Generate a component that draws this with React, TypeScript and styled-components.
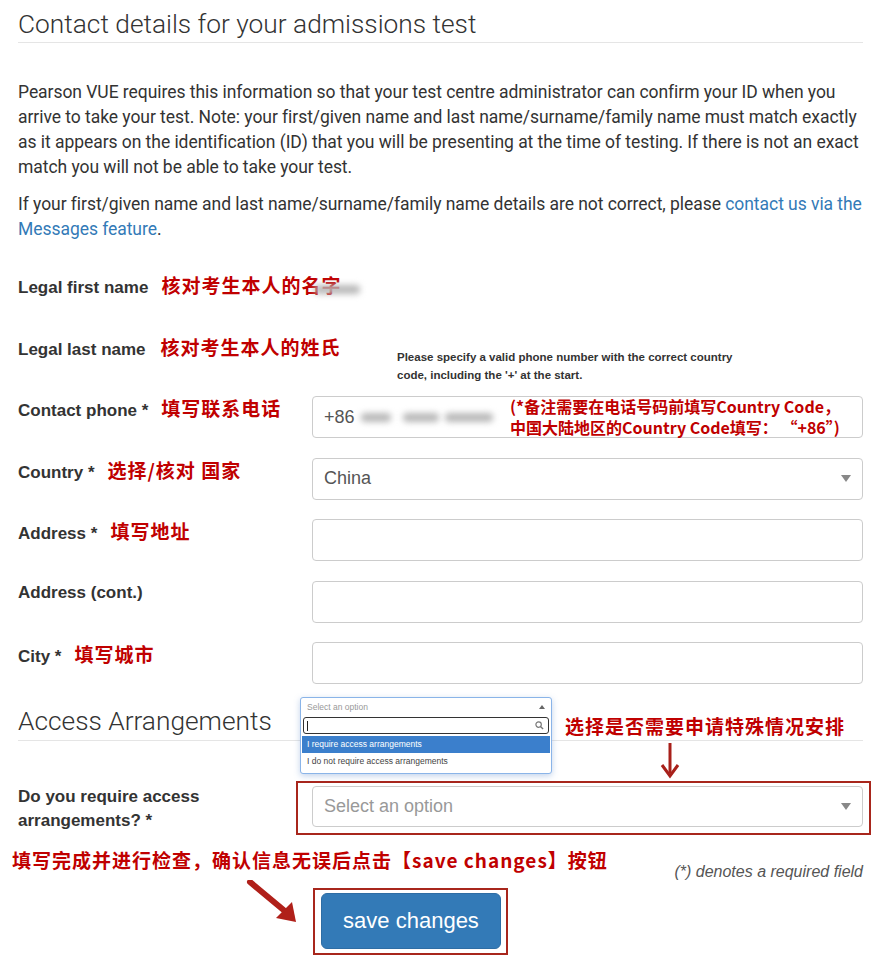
import styled, { createGlobalStyle } from "styled-components";

const GlobalStyle = createGlobalStyle`
  body {
    margin: 0;
    background: #fff;
    color: #333;
    font-family: "Liberation Sans", Arial, sans-serif;
  }
`;

const RED = "#c00000";
const BOX_RED = "#a8261c";

const Page = styled.div`
  width: 877px;
  box-sizing: border-box;
  padding: 0 14px 20px 18px;
`;

const Title = styled.h2`
  margin: 9px 0 0;
  padding-bottom: 3px;
  font-family: Roboto, "Liberation Sans", sans-serif;
  font-weight: 300;
  font-size: 26.3px;
  line-height: 30px;
  color: #333;
  border-bottom: 1px solid #e5e5e5;
`;

const Para = styled.p<{ $top: number }>`
  margin: ${(p) => p.$top}px 0 0;
  font-family: Roboto, "Liberation Sans", sans-serif;
  font-size: 17.5px;
  letter-spacing: -0.05px;
  line-height: 25px;
  color: #333;
`;

const Link = styled.a`
  color: #337ab7;
  text-decoration: none;
`;

const Form = styled.div`
  margin-top: 31px;
  display: flex;
  flex-direction: column;
  gap: 19.5px;
`;

const Row = styled.div`
  display: grid;
  grid-template-columns: 294px 1fr;
  height: 42px;
`;

const Label = styled.div`
  font-weight: 700;
  font-size: 17px;
  line-height: 24px;
  color: #333;
  white-space: nowrap;
`;

const Note = styled.span<{ $gap?: number }>`
  margin-left: ${(p) => p.$gap ?? 13}px;
  font-family: "Noto Sans CJK SC", sans-serif;
  font-weight: 700;
  font-size: 19px;
  letter-spacing: 1px;
  color: ${RED};
`;

const Field = styled.div`
  position: relative;
`;

const Blur = styled.span<{ $w: number; $left: number; $top: number }>`
  display: inline-block;
  width: ${(p) => p.$w}px;
  height: 9px;
  margin-left: ${(p) => p.$left}px;
  margin-top: ${(p) => p.$top}px;
  background: #b8b8b8;
  border-radius: 4px;
  filter: blur(3px);
  vertical-align: middle;
`;

const Help = styled.div`
  padding: 13px 0 0 85px;
  font-size: 11.5px;
  font-weight: 700;
  line-height: 18px;
  color: #333;
`;

const Input = styled.div<{ $h?: number }>`
  height: ${(p) => p.$h ?? 42}px;
  box-sizing: border-box;
  border: 1px solid #ccc;
  border-radius: 4px;
  padding: 0 11px;
  display: flex;
  align-items: center;
  font-size: 18px;
  color: #555;
  background: #fff;
`;

const Placeholder = styled.span`
  color: #999;
  flex: 1;
`;

const Value = styled.span`
  flex: 1;
`;

const Caret = () => (
  <svg width="10" height="7" viewBox="0 0 10 7">
    <path d="M0 0 L10 0 L5 7 Z" fill="#888" />
  </svg>
);

const PhoneNote = styled.div`
  position: absolute;
  left: 198px;
  top: 0;
  font-family: "Noto Sans CJK SC", sans-serif;
  font-weight: 700;
  font-size: 16px;
  line-height: 21px;
  color: ${RED};
  white-space: nowrap;
`;

const Section = styled.div`
  position: relative;
  margin-top: 22px;
`;

const SubTitle = styled.h2`
  margin: 0;
  padding-bottom: 4px;
  font-family: Roboto, "Liberation Sans", sans-serif;
  font-weight: 300;
  font-size: 26.3px;
  line-height: 30px;
  color: #333;
  border-bottom: 1px solid #e5e5e5;
`;

const Popup = styled.div`
  position: absolute;
  left: 282px;
  top: -9px;
  width: 252px;
  box-sizing: border-box;
  border: 1px solid #8ab4e8;
  border-radius: 3px;
  background: #fff;
  box-shadow: 0 2px 6px rgba(80, 130, 200, 0.35);
  font-size: 8.5px;
  color: #444;
  padding-bottom: 3px;
`;

const PopupHead = styled.div`
  display: flex;
  align-items: center;
  justify-content: space-between;
  height: 18px;
  padding: 0 6px;
  color: #999;
`;

const Search = styled.div`
  margin: 1px 2px 2px;
  height: 17px;
  box-sizing: border-box;
  border: 1px solid #333;
  border-radius: 3px;
  display: flex;
  align-items: center;
  justify-content: space-between;
  padding: 0 4px 0 3px;
`;

const Cursor = styled.span`
  width: 1px;
  height: 10px;
  background: #222;
`;

const Option = styled.div<{ $active?: boolean }>`
  height: 17px;
  line-height: 17px;
  padding: 0 5px;
  margin: 0 1px;
  background: ${(p) => (p.$active ? "#3b7fcc" : "transparent")};
  color: ${(p) => (p.$active ? "#fff" : "#444")};
`;

const FloatNote = styled.span`
  position: absolute;
  left: 547px;
  top: 8px;
  font-family: "Noto Sans CJK SC", sans-serif;
  font-weight: 700;
  font-size: 19px;
  line-height: 24px;
  letter-spacing: 1px;
  color: ${RED};
`;

const DownArrow = styled.svg`
  position: absolute;
  left: 642px;
  top: 37px;
`;

const AccessRow = styled.div`
  display: grid;
  grid-template-columns: 294px 1fr;
  margin-top: 40px;
`;

const AccessLabel = styled(Label)`
  padding-top: 4px;
  white-space: normal;
  width: 200px;
`;

const Highlight = styled.div`
  margin: 0 -8px 0 -16px;
  border: 2px solid ${BOX_RED};
  padding: 3px 6px 6px 14px;
`;

const Footer = styled.div`
  display: flex;
  justify-content: space-between;
  align-items: flex-start;
  margin-top: 13px;
`;

const BottomNote = styled(Note)`
  margin-left: -6px;
  line-height: 24px;
`;

const Required = styled.span`
  margin-top: 14px;
  font-size: 16px;
  line-height: 20px;
  font-style: italic;
  color: #555;
`;

const ButtonRow = styled.div`
  display: flex;
  align-items: flex-start;
  margin-top: 6px;
`;

const ArrowSvg = styled.svg`
  margin: -8px 0 0 228px;
`;

const ButtonBox = styled.div`
  margin-left: 13px;
  border: 2px solid ${BOX_RED};
  padding: 3px 5px 4px 6px;
`;

const SaveButton = styled.button`
  width: 180px;
  height: 56px;
  border: 1px solid #2e6da4;
  border-radius: 6px;
  background: #337ab7;
  color: #fff;
  font-family: "Liberation Sans", Arial, sans-serif;
  font-size: 22px;
  cursor: pointer;
`;

export default function App() {
  return (
    <>
      <GlobalStyle />
      <Page>
        <Title>Contact details for your admissions test</Title>
        <Para $top={37}>
          Pearson VUE requires this information so that your test centre administrator can confirm
          your ID when you arrive to take your test. Note: your first/given name and last
          name/surname/family name must match exactly as it appears on the identification (ID) that
          you will be presenting at the time of testing. If there is not an exact match you will not
          be able to take your test.
        </Para>
        <Para $top={12}>
          If your first/given name and last name/surname/family name details are not correct, please{" "}
          <Link href="#">contact us via the Messages feature</Link>.
        </Para>

        <Form>
          <Row>
            <Label>
              Legal first name<Note>核对考生本人的名字</Note>
            </Label>
            <Field>
              <Blur $w={46} $left={2} $top={12} />
            </Field>
          </Row>
          <Row>
            <Label>
              Legal last name<Note $gap={15}>核对考生本人的姓氏</Note>
            </Label>
            <Field>
              <Help>
                Please specify a valid phone number with the correct country
                <br />
                code, including the '+' at the start.
              </Help>
            </Field>
          </Row>
          <Row>
            <Label>
              Contact phone *<Note>填写联系电话</Note>
            </Label>
            <Field>
              <Input>
                +86
                <Blur $w={30} $left={6} $top={0} />
                <Blur $w={36} $left={12} $top={0} />
                <Blur $w={48} $left={6} $top={0} />
              </Input>
              <PhoneNote>
                (*备注需要在电话号码前填写Country Code，
                <br />
                中国大陆地区的Country Code填写：&nbsp;“+86”)
              </PhoneNote>
            </Field>
          </Row>
          <Row>
            <Label>
              Country *<Note>选择/核对 国家</Note>
            </Label>
            <Field>
              <Input>
                <Value>China</Value>
                <Caret />
              </Input>
            </Field>
          </Row>
          <Row>
            <Label>
              Address *<Note>填写地址</Note>
            </Label>
            <Field>
              <Input />
            </Field>
          </Row>
          <Row>
            <Label>Address (cont.)</Label>
            <Field>
              <Input />
            </Field>
          </Row>
          <Row>
            <Label>
              City *<Note>填写城市</Note>
            </Label>
            <Field>
              <Input />
            </Field>
          </Row>
        </Form>

        <Section>
          <SubTitle>Access Arrangements</SubTitle>
          <Popup>
            <PopupHead>
              <span>Select an option</span>
              <svg width="6" height="4" viewBox="0 0 6 4">
                <path d="M0 4 L6 4 L3 0 Z" fill="#666" />
              </svg>
            </PopupHead>
            <Search>
              <Cursor />
              <svg width="9" height="9" viewBox="0 0 10 10">
                <circle cx="4" cy="4" r="3" fill="none" stroke="#777" strokeWidth="1.3" />
                <path d="M6.3 6.3 L9 9" stroke="#777" strokeWidth="1.5" />
              </svg>
            </Search>
            <Option $active>I require access arrangements</Option>
            <Option>I do not require access arrangements</Option>
          </Popup>
          <FloatNote>选择是否需要申请特殊情况安排</FloatNote>
          <DownArrow width="20" height="36" viewBox="0 0 20 36">
            <path d="M10 0 L10 30" stroke="#a8201a" strokeWidth="3" />
            <path d="M2 22 L10 33 L18 22" fill="none" stroke="#a8201a" strokeWidth="3" />
          </DownArrow>

          <AccessRow>
            <AccessLabel>Do you require access arrangements? *</AccessLabel>
            <Highlight>
              <Input $h={41}>
                <Placeholder>Select an option</Placeholder>
                <Caret />
              </Input>
            </Highlight>
          </AccessRow>
        </Section>

        <Footer>
          <BottomNote>填写完成并进行检查，确认信息无误后点击【save changes】按钮</BottomNote>
          <Required>(*) denotes a required field</Required>
        </Footer>

        <ButtonRow>
          <ArrowSvg width="54" height="44" viewBox="0 0 54 44">
            <path d="M4 2 L40 32" stroke="#b0201a" strokeWidth="6" strokeLinecap="round" />
            <path d="M30 38 L50 42 L46 22 Z" fill="#b0201a" />
          </ArrowSvg>
          <ButtonBox>
            <SaveButton>save changes</SaveButton>
          </ButtonBox>
        </ButtonRow>
      </Page>
    </>
  );
}
